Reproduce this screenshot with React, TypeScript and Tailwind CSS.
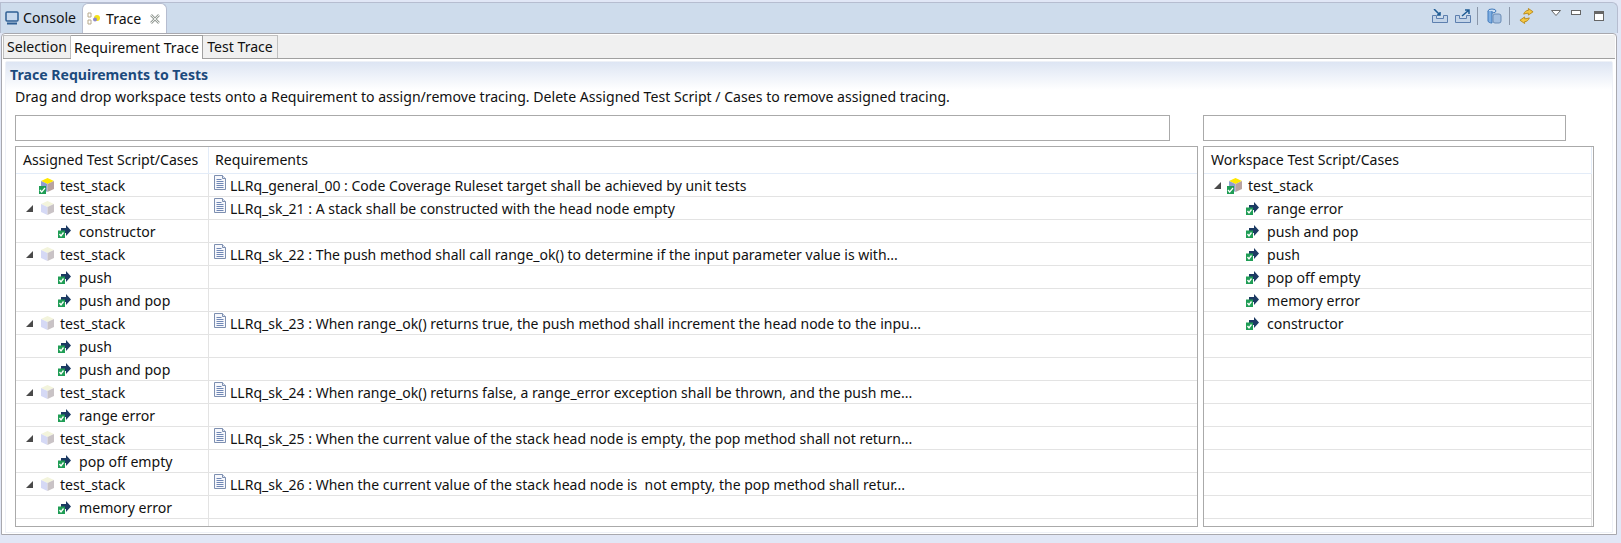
import React from "react";

const CaseIcon = () => (
    <svg width="13" height="13" viewBox="0 0 13 13" className="shrink-0">
        <path d="M3 3h5V0l5 5.500L8 11V8H3z" fill="#1c3a63" />
        <rect x="0" y="5.500" width="7" height="7.500" fill="#1f9d55" />
        <path d="M1.500 9l1.500 2 2.500-3.500" stroke="#fff" strokeWidth="1.300" fill="none" />
    </svg>
);

const Cube = ({ active }: { active?: boolean }) => (
    <svg width="13" height="14" viewBox="0 0 13 14" className="shrink-0">
        <path d="M6.500 0L13 3 6.500 6 0 3z" fill={active ? "#ffe800" : "#f3f4dc"} />
        <path d="M0 3l6.500 3v8L0 11z" fill={active ? "#8f9fd0" : "#d5d9f5"} />
        <path d="M13 3L6.500 6v8l6.500-3z" fill={active ? "#b9a3a0" : "#c9c3c6"} />
    </svg>
);

const CubeBadge = () => (
    <span className="relative block w-[13px] h-[14px] shrink-0">
        <Cube active />
        <svg width="7" height="8" viewBox="0 0 7 8" className="absolute left-[-2px] bottom-[-2px]">
            <rect width="7" height="8" fill="#1f9d55" />
            <path d="M1 4l1.700 2L6 2" stroke="#fff" strokeWidth="1.200" fill="none" />
        </svg>
    </span>
);

const DocIcon = () => (
    <svg width="12" height="15" viewBox="0 0 12 15" className="shrink-0 mt-[-5px]">
        <path d="M.5.500h8l3 3v11H.5z" fill="#f7f8fc" stroke="#7d8fb0" />
        <path d="M8.500.500v3h3" fill="#dfe5f2" stroke="#7d8fb0" />
        <path d="M2.500 4.500h5M2.500 6.500h7M2.500 8.500h7M2.500 10.500h7M2.500 12.500h7" stroke="#6f87b5" />
    </svg>
);

const Twisty = () => (
    <svg width="7" height="7" viewBox="0 0 7 7" className="shrink-0">
        <path d="M7 0v7H0z" fill="#4a4a4a" />
    </svg>
);

type LeftRow = { kind: "root" | "stack" | "case"; label: string; req?: string };

const leftRows: LeftRow[] = [
    { kind: "root", label: "test_stack", req: "LLRq_general_00 : Code Coverage Ruleset target shall be achieved by unit tests" },
    { kind: "stack", label: "test_stack", req: "LLRq_sk_21 : A stack shall be constructed with the head node empty" },
    { kind: "case", label: "constructor" },
    { kind: "stack", label: "test_stack", req: "LLRq_sk_22 : The push method shall call range_ok() to determine if the input parameter value is with..." },
    { kind: "case", label: "push" },
    { kind: "case", label: "push and pop" },
    { kind: "stack", label: "test_stack", req: "LLRq_sk_23 : When range_ok() returns true, the push method shall increment the head node to the inpu..." },
    { kind: "case", label: "push" },
    { kind: "case", label: "push and pop" },
    { kind: "stack", label: "test_stack", req: "LLRq_sk_24 : When range_ok() returns false, a range_error exception shall be thrown, and the push me..." },
    { kind: "case", label: "range error" },
    { kind: "stack", label: "test_stack", req: "LLRq_sk_25 : When the current value of the stack head node is empty, the pop method shall not return..." },
    { kind: "case", label: "pop off empty" },
    { kind: "stack", label: "test_stack", req: "LLRq_sk_26 : When the current value of the stack head node is  not empty, the pop method shall retur..." },
    { kind: "case", label: "memory error" },
];

const rightCases = ["range error", "push and pop", "push", "pop off empty", "memory error", "constructor"];

const App = () => {
    return (
        <div className="w-[1621px] h-[543px] overflow-hidden bg-[#e1e7f6] pt-[2px] font-['Noto_Sans','Open_Sans',sans-serif] text-[14.1px] text-[#111]">
            {/* View tabs */}
            <div className="h-[31px] flex items-end bg-[#cedcec] border-t border-[#b6bdd0] border-r border-l rounded-tr-[6px] mr-[3px]">
                <div className="flex items-center gap-[4px] pl-[4px] h-[30px] w-[81px]">
                    <svg width="14" height="14" viewBox="0 0 14 14" className="shrink-0">
                        <rect x="1" y="1" width="12" height="9" rx="1" fill="#c8d9ee" stroke="#2f5f94" strokeWidth="1.500" />
                        <path d="M2 12.500h10" stroke="#2f5f94" strokeWidth="2" />
                    </svg>
                    <span>Console</span>
                </div>
                <div className="flex items-center h-[30px] w-[85px] bg-white rounded-t-[6px] border-t border-l border-r border-[#b6bdd0] pl-[3px] gap-[4px]">
                    <svg width="16" height="16" viewBox="0 0 16 16" className="shrink-0">
                        <path d="M2 2h3v4H2zM2 9h3v4H2z" fill="none" stroke="#b7a98a" />
                        <circle cx="11" cy="7" r="3" fill="#f4e21a" />
                        <circle cx="9" cy="8.500" r="2" fill="#8d88c8" />
                    </svg>
                    <span>Trace</span>
                    <svg width="10" height="10" viewBox="0 0 10 10" className="ml-[5px]">
                        <path d="M1 1l8 8M9 1L1 9" stroke="#9aa09a" strokeWidth="2.500" fill="none" />
                        <path d="M1 1l8 8M9 1L1 9" stroke="#fff" strokeWidth="0.800" fill="none" />
                    </svg>
                </div>
                <div className="ml-auto flex items-center h-full gap-[7px] pr-[13px] pb-[5px]">
                    <svg width="16" height="14" viewBox="0 0 16 14">
                        <path d="M.5 6.500v7h15v-7h-4v3h-7v-3z" fill="#c3d4e8" stroke="#5d7fae" />
                        <path d="M2 0l6 6M8 3v3H5" stroke="#1e5b94" strokeWidth="1.500" fill="none" />
                    </svg>
                    <svg width="16" height="14" viewBox="0 0 16 14">
                        <path d="M.5 6.500v7h15v-7h-4v3h-7v-3z" fill="#c3d4e8" stroke="#5d7fae" />
                        <path d="M7 7l7-6M10 1h4v4" stroke="#1e5b94" strokeWidth="1.500" fill="none" />
                    </svg>
                    <span className="w-px h-[18px] bg-[#8a96a8] ml-[-1px]" />
                    <svg width="15" height="16" viewBox="0 0 15 16" className="ml-[2px]">
                        <ellipse cx="5" cy="3" rx="4" ry="2" fill="#cfe0f4" stroke="#3f79ba" />
                        <path d="M1 3v10c0 1 2 2 4 2V3" fill="#7eaee2" stroke="#3f79ba" />
                        <rect x="6" y="6" width="8" height="9" rx="2" fill="#a4bfe0" stroke="#6b8cb5" />
                    </svg>
                    <span className="w-px h-[18px] bg-[#8a96a8]" />
                    <svg width="15" height="16" viewBox="0 0 16 16" className="ml-[2px]">
                        <path d="M5 6c1-3 3-4 5-4V0l5 3.500-5 3.500V5C8 5 7 5.500 5 6z" fill="#f5c842" stroke="#b98a1c" />
                        <path d="M11 10c-1 3-3 4-5 4v2L1 12.500 6 9v2c2 0 3-.5 5-1z" fill="#f5c842" stroke="#b98a1c" />
                    </svg>
                    <svg width="10" height="6" viewBox="0 0 10 6" className="ml-[10px] mb-[6px]">
                        <path d="M.5.500h9L5 5.500z" fill="#fff" stroke="#666" />
                    </svg>
                    <span className="w-[10px] h-[5px] border border-[#666] bg-white ml-[3px] mb-[6px]" />
                    <span className="w-[10px] h-[10px] border border-[#666] border-t-[3px] bg-white ml-[6px]" />
                </div>
            </div>

            {/* View body */}
            <div className="h-[502px] ml-[1px] mr-[4px] border border-[#a8a8ae] bg-white rounded-t-[4px] p-px">
                {/* Sub tabs */}
                <div className="h-[24px] flex items-end bg-[#f0f0f0] border-b border-[#a0a0a0]">
                    <div className="h-[23px] w-[68px] border-t border-r border-l border-[#c0c0c0] flex items-center justify-center">Selection</div>
                    <div className="h-[24px] w-[132px] mb-[-1px] bg-white border-t border-r border-[#a0a0a0] flex items-center justify-center">Requirement Trace</div>
                    <div className="h-[23px] w-[75px] border-t border-r border-[#c0c0c0] flex items-center justify-center">Test Trace</div>
                </div>

                {/* Form */}
                <div className="mt-[2px] mx-[2px] h-[472px] border border-[#eef1f7] rounded-t-[2px] bg-gradient-to-b from-[#dde5f3] to-white bg-[length:100%_28px] bg-no-repeat">
                    <div className="h-[26px] flex items-center px-[4px] font-bold text-[#1c4a7d] leading-none">Trace Requirements to Tests</div>
                    <div className="h-[18px] leading-[18px] pl-[9px]">Drag and drop workspace tests onto a Requirement to assign/remove tracing. Delete Assigned Test Script / Cases to remove assigned tracing.</div>

                    <div className="flex pl-[9px] mt-[9px] gap-[33px]">
                        <div className="w-[1155px] h-[26px] border border-[#aaa]" />
                        <div className="w-[363px] h-[26px] border border-[#aaa]" />
                    </div>

                    <div className="flex pl-[9px] mt-[5px] gap-[5px]">
                        {/* Assigned / requirements tree */}
                        <div className="w-[1183px] h-[381px] border border-[#aaa] overflow-hidden">
                            <div className="flex h-[27px] border-b border-[#e3ecf8] items-center">
                                <div className="w-[193px] h-full border-r border-[#e3ecf8] pl-[7px] flex items-center">Assigned Test Script/Cases</div>
                                <div className="pl-[6px]">Requirements</div>
                            </div>
                            {leftRows.map((row, i) => (
                                <div key={i} className="flex h-[23px] border-b border-[#e3e3e3]">
                                    <div className="w-[193px] border-r border-[#e3e3e3] flex items-center">
                                        {row.kind === "case" ? (
                                            <span className="flex items-center gap-[8px] pl-[42px]"><CaseIcon /><span className="pt-px">{row.label}</span></span>
                                        ) : (
                                            <span className="flex items-center pl-[10px]">
                                                <span className="w-[15px]">{row.kind === "stack" && <Twisty />}</span>
                                                {row.kind === "root" ? <CubeBadge /> : <Cube />}
                                                <span className="ml-[6px] pt-px">{row.label}</span>
                                            </span>
                                        )}
                                    </div>
                                    {row.req && (
                                        <div className="flex items-center gap-[4px] pl-[5px] whitespace-pre text-[14px]"><DocIcon /><span className="pt-px">{row.req}</span></div>
                                    )}
                                </div>
                            ))}
                            <div className="w-[193px] h-[7px] border-r border-[#e3e3e3]" />
                        </div>

                        {/* Workspace tree */}
                        <div className="w-[391px] h-[381px] border border-[#aaa] overflow-hidden">
                            <div className="h-[27px] border-b border-r border-[#e3ecf8] pl-[7px] flex items-center mr-px">Workspace Test Script/Cases</div>
                            {Array.from({ length: 15 }).map((_, i) => (
                                <div key={i} className="h-[23px] border-b border-r border-[#e3e3e3] mr-px flex items-center">
                                    {i === 0 && (
                                        <span className="flex items-center pl-[10px]">
                                            <span className="w-[15px]"><Twisty /></span>
                                            <CubeBadge />
                                            <span className="ml-[6px] pt-px">test_stack</span>
                                        </span>
                                    )}
                                    {i > 0 && i <= rightCases.length && (
                                        <span className="flex items-center gap-[8px] pl-[42px]"><CaseIcon /><span className="pt-px">{rightCases[i - 1]}</span></span>
                                    )}
                                </div>
                            ))}
                            <div className="h-[7px] border-r border-[#e3e3e3] mr-px" />
                        </div>
                    </div>
                </div>
            </div>
        </div>
    );
};

export default App;
